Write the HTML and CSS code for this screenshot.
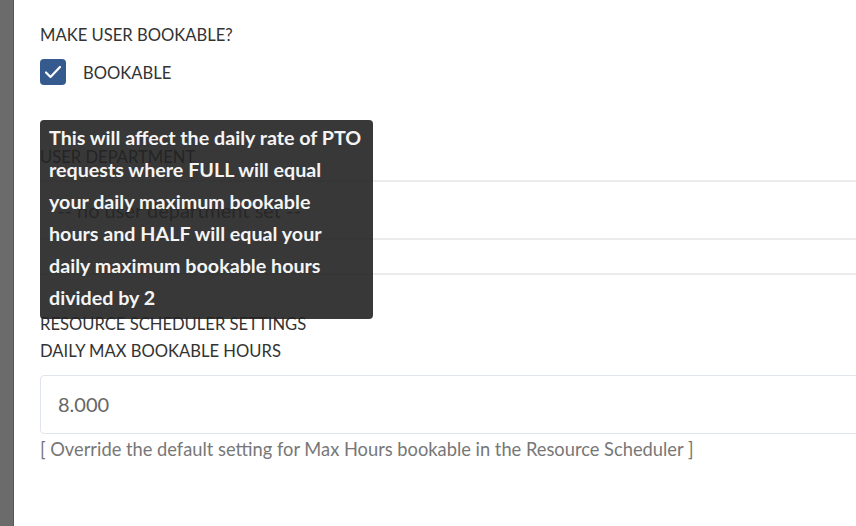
FILE: index.html
```html
<!DOCTYPE html>
<html lang="en">
  <head>
    <meta charset="UTF-8" />
    <meta name="viewport" content="width=device-width, initial-scale=1.0" />
    <title>User settings</title>
    <link rel="stylesheet" href="styles.css">
  </head>
  <body>
    <div class="page">
      <div class="sidebar"></div>
      <div class="content">
        <form class="settings">
          <div class="label">Make user bookable?</div>
          <label class="check-row">
            <span class="checkbox">
              <svg width="18" height="14" viewBox="0 0 18 14">
                <path d="M2 7.5 L6.5 12 L16 2" fill="none" stroke="#fff" stroke-width="2.2" stroke-linecap="round" stroke-linejoin="round" />
              </svg>
            </span>
            <span class="check-text">Bookable</span>
          </label>

          <div class="label dept-label">User department</div>
          <div class="select">-- no user department set --</div>
          <div class="divider"></div>

          <div class="label section-label">Resource scheduler settings</div>
          <div class="label">Daily max bookable hours</div>
          <div class="input">8.000</div>
          <div class="help">[ Override the default setting for Max Hours bookable in the Resource Scheduler ]</div>

          <div class="tooltip">
            This will affect the daily rate of PTO<br>
            requests where FULL will equal<br>
            your daily maximum bookable<br>
            hours and HALF will equal your<br>
            daily maximum bookable hours<br>
            divided by 2
          </div>
        </form>
      </div>
    </div>
  </body>
</html>
```

FILE: styles.css
```css
body {
  margin: 0;
  font-family: Lato, "Open Sans", sans-serif;
  color: #333;
  overflow: hidden;
  background: #fff;
}
.page {
  display: flex;
  height: 526px;
}
.sidebar {
  width: 13px;
  flex: none;
  background-color: #6b6b6b;
  border-right: 1px solid #565656;
}
.content {
  flex: none;
  width: 860px;
  padding-left: 26px;
}
.settings {
  position: relative;
  padding-top: 25px;
}
.label {
  font-size: 16.6px;
  line-height: 20px;
  text-transform: uppercase;
  color: #333;
}
.check-row {
  display: flex;
  align-items: center;
  margin-top: 14px;
  height: 26px;
}
.checkbox {
  width: 26px;
  height: 26px;
  border-radius: 4px;
  background-color: #355a8d;
  display: flex;
  align-items: center;
  justify-content: center;
}
.check-text {
  margin-left: 17px;
  padding-top: 2px;
  font-size: 16.6px;
  text-transform: uppercase;
}
.dept-label {
  margin-top: 62px;
}
.select {
  margin-top: 13px;
  height: 56px;
  border-top: 2px solid #ebebeb;
  border-bottom: 2px solid #ebebeb;
  padding-left: 17px;
  font-size: 20px;
  line-height: 56px;
  color: #555;
}
.divider {
  margin-top: 33px;
  border-top: 2px solid #ebebeb;
}
.section-label {
  margin-top: 39px;
}
.settings .section-label + .label {
  margin-top: 7px;
}
.input {
  margin-top: 14px;
  height: 57px;
  border: 1px solid #e0e4ec;
  border-radius: 4px;
  padding-left: 17px;
  font-size: 20px;
  line-height: 57px;
  color: #666;
}
.help {
  margin-top: 5px;
  font-size: 18.3px;
  line-height: 20px;
  color: #777;
}
.tooltip {
  position: absolute;
  left: 0;
  top: 120px;
  width: 316px;
  padding: 2px 8px 5px 9px;
  background-color: rgba(34, 34, 34, 0.9);
  border-radius: 4px;
  color: #f4f4f4;
  font-size: 19.7px;
  font-weight: bold;
  line-height: 32px;
  white-space: nowrap;
}
```
